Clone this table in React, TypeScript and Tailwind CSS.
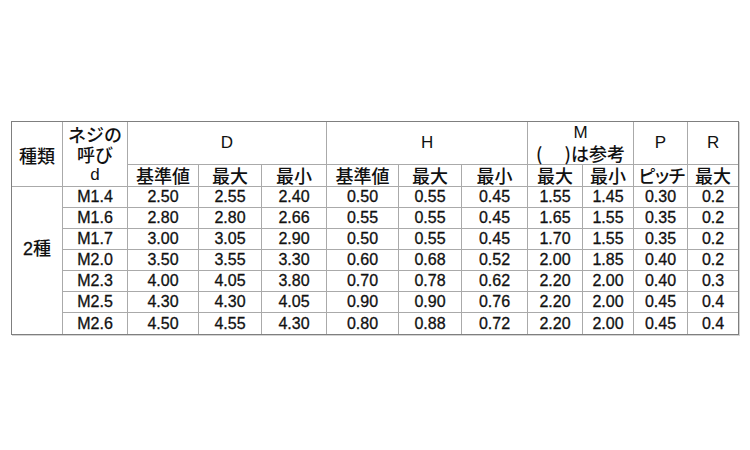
const rows: string[][] = [
  ["M1.4", "2.50", "2.55", "2.40", "0.50", "0.55", "0.45", "1.55", "1.45", "0.30", "0.2"],
  ["M1.6", "2.80", "2.80", "2.66", "0.55", "0.55", "0.45", "1.65", "1.55", "0.35", "0.2"],
  ["M1.7", "3.00", "3.05", "2.90", "0.50", "0.55", "0.45", "1.70", "1.55", "0.35", "0.2"],
  ["M2.0", "3.50", "3.55", "3.30", "0.60", "0.68", "0.52", "2.00", "1.85", "0.40", "0.2"],
  ["M2.3", "4.00", "4.05", "3.80", "0.70", "0.78", "0.62", "2.20", "2.00", "0.40", "0.3"],
  ["M2.5", "4.30", "4.30", "4.05", "0.90", "0.90", "0.76", "2.20", "2.00", "0.45", "0.4"],
  ["M2.6", "4.50", "4.55", "4.30", "0.80", "0.88", "0.72", "2.20", "2.00", "0.45", "0.4"],
];

const widths = [51, 65, 71, 63, 65, 72, 63, 66, 55, 51, 54, 50];

const jp = "font-['Noto_Sans_CJK_JP',sans-serif] text-[18px] font-medium leading-[20px] whitespace-nowrap";
const latin = "font-['Liberation_Sans',Arial,sans-serif] text-[17px] font-normal leading-[20px]";
const num = "font-['Liberation_Sans',Arial,sans-serif] text-[16px] leading-[20px] [-webkit-text-stroke:0.3px_#111]";

const line = "border-[#aaaaaa]";

const App = () => {
  return (
    <div className="w-[750px] h-[450px] bg-white text-[#111] pt-[121px] pl-[11px]">
      <div className="w-[728px] border border-[#7f7f7f] shadow-[1px_1px_0_#d4d4d4]">
        <table className="w-full table-fixed border-separate border-spacing-0 text-center">
          <colgroup>
            {widths.map((w, i) => (
              <col key={i} style={{ width: w }} />
            ))}
          </colgroup>
          <thead>
            <tr className="h-[42px]">
              <th rowSpan={2} className={`${jp} p-0 pt-[1px] border-r border-b ${line}`}>
                種類
              </th>
              <th rowSpan={2} className={`${jp} p-0 border-r border-b ${line} align-top pt-[2px]`}>
                <div className="flex flex-col items-center">
                  <span>ネジの</span>
                  <span>呼び</span>
                  <span className={`${latin} leading-[22px]`}>d</span>
                </div>
              </th>
              <th colSpan={3} className={`${latin} p-0 border-r border-b ${line}`}>
                D
              </th>
              <th colSpan={3} className={`${latin} p-0 border-r border-b ${line}`}>
                H
              </th>
              <th colSpan={2} className={`p-0 border-r border-b ${line} font-normal`}>
                <div className="flex flex-col items-center">
                  <span className={latin}>M</span>
                  <span className={`${jp} whitespace-pre`}>(　 )は参考</span>
                </div>
              </th>
              <th className={`${latin} p-0 border-r border-b ${line}`}>P</th>
              <th className={`${latin} p-0 border-b ${line}`}>R</th>
            </tr>
            <tr className="h-[22px]">
              {["基準値", "最大", "最小", "基準値", "最大", "最小", "最大", "最小"].map((t, i) => (
                <th key={i} className={`${jp} p-0 border-r border-b ${line}`}>
                  {t}
                </th>
              ))}
              <th className={`${jp} p-0 border-r border-b ${line} tracking-[-3px]`}>ピッチ</th>
              <th className={`${jp} p-0 border-b ${line}`}>最大</th>
            </tr>
          </thead>
          <tbody>
            {rows.map((r, ri) => {
              const last = ri === rows.length - 1;
              return (
                <tr key={r[0]} className="h-[21px]">
                  {ri === 0 && (
                    <td rowSpan={rows.length} className={`${jp} p-0 border-r ${line} pb-[26px]`}>
                      <span className="font-['Liberation_Sans',Arial,sans-serif] text-[18px] [-webkit-text-stroke:0.3px_#111]">2</span>種
                    </td>
                  )}
                  {r.map((v, ci) => (
                    <td
                      key={ci}
                      className={`${num} p-0 ${line} ${ci < r.length - 1 ? "border-r" : ""} ${last ? "" : "border-b"}`}
                    >
                      {v}
                    </td>
                  ))}
                </tr>
              );
            })}
          </tbody>
        </table>
      </div>
    </div>
  );
};

export default App;
